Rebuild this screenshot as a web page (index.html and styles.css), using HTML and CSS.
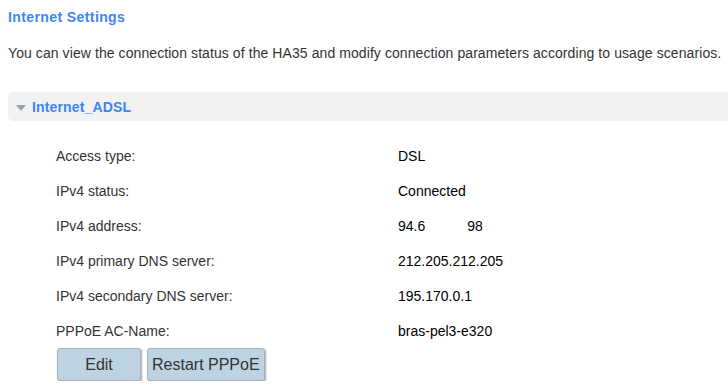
FILE: index.html
```html
<!DOCTYPE html>
<html lang="en">
<head>
    <meta charset="UTF-8">
    <title>Internet Settings</title>
    <link rel="stylesheet" href="styles.css">
</head>
<body>
    <div class="page">
        <h1 class="page-title">Internet Settings</h1>
        <p class="page-desc">You can view the connection status of the HA35 and modify connection parameters according to usage scenarios.</p>

        <div class="section-head">
            <span class="caret"></span>
            <span class="section-name">Internet_ADSL</span>
        </div>

        <div class="info">
            <div class="row"><span class="label">Access type:</span><span class="value">DSL</span></div>
            <div class="row"><span class="label">IPv4 status:</span><span class="value">Connected</span></div>
            <div class="row"><span class="label">IPv4 address:</span><span class="value">94.6<span class="masked"></span>98</span></div>
            <div class="row"><span class="label">IPv4 primary DNS server:</span><span class="value">212.205.212.205</span></div>
            <div class="row"><span class="label">IPv4 secondary DNS server:</span><span class="value">195.170.0.1</span></div>
            <div class="row"><span class="label">PPPoE AC-Name:</span><span class="value">bras-pel3-e320</span></div>
        </div>

        <div class="actions">
            <button class="btn btn-edit">Edit</button>
            <button class="btn">Restart PPPoE</button>
        </div>
    </div>
</body>
</html>
```

FILE: styles.css
```css
* {
    margin: 0;
    padding: 0;
    box-sizing: border-box;
}

body {
    background: #ffffff;
    font-family: "Liberation Sans", Arial, sans-serif;
    color: #333333;
    overflow: hidden;
}

.page {
    padding: 8px 0 0 8px;
}

.page-title {
    font-size: 14px;
    font-weight: bold;
    color: #3b86f2;
    line-height: 18px;
    letter-spacing: 0.4px;
}

.page-desc {
    font-size: 14px;
    line-height: 18px;
    margin-top: 18px;
    letter-spacing: 0.08px;
    white-space: nowrap;
}

.section-head {
    margin-top: 30px;
    height: 29px;
    background: #f2f2f2;
    border-radius: 5px 0 0 5px;
    display: flex;
    align-items: center;
    padding-left: 8px;
}

.caret {
    width: 0;
    height: 0;
    border-left: 5px solid transparent;
    border-right: 5px solid transparent;
    border-top: 6px solid #8fa3b3;
    margin-right: 6px;
    margin-top: 2px;
}

.section-name {
    font-size: 14px;
    font-weight: bold;
    color: #3b86f2;
    letter-spacing: 0.15px;
}

.info {
    padding: 17px 0 0 48px;
}

.row {
    display: flex;
    height: 35px;
    align-items: center;
    font-size: 14px;
}

.label {
    width: 342px;
    color: #333333;
}

.value {
    color: #000000;
}

.masked {
    display: inline-block;
    width: 42px;
}

.actions {
    display: flex;
    gap: 6px;
    padding-left: 49px;
}

.btn {
    height: 33px;
    font-family: "Liberation Sans", Arial, sans-serif;
    font-size: 16px;
    color: #333333;
    background: #bdd3e2;
    border: 1px solid #a5b2bc;
    border-radius: 3px;
    box-shadow: 1px 1px 2px rgba(0, 0, 0, 0.35);
    padding: 0 4px;
}

.btn-edit {
    width: 84px;
}
```
